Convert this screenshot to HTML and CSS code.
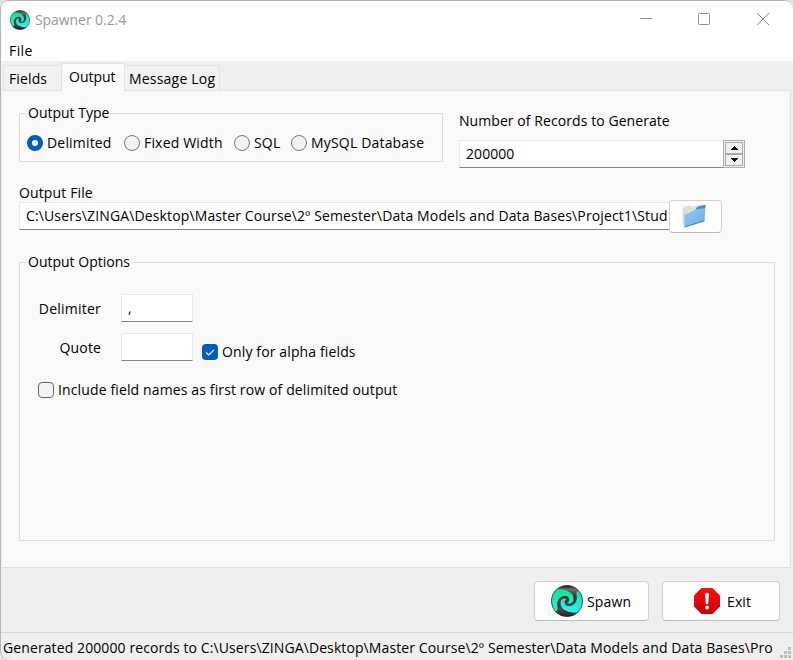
FILE: index.html
```html
<!DOCTYPE html>
<html lang="en">
<head>
<meta charset="utf-8">
<title>Spawner 0.2.4</title>
<link rel="stylesheet" href="styles.css">
</head>
<body>
<svg width="0" height="0" class="defs">
  <defs>
    <linearGradient id="dark" x1="0" y1="0" x2="0" y2="1"><stop offset="0" stop-color="#151515"/><stop offset=".14" stop-color="#707070"/><stop offset=".35" stop-color="#303030"/><stop offset=".75" stop-color="#484848"/><stop offset="1" stop-color="#222"/></linearGradient>
    <linearGradient id="teal" gradientUnits="userSpaceOnUse" x1="0" y1="-16" x2="0" y2="16"><stop offset="0" stop-color="#18d890"/><stop offset=".5" stop-color="#20e8b8"/><stop offset="1" stop-color="#20f4f4"/></linearGradient>
    <linearGradient id="cyan" gradientUnits="userSpaceOnUse" x1="0" y1="16" x2="0" y2="-16"><stop offset="0" stop-color="#18c890"/><stop offset=".5" stop-color="#22e8cc"/><stop offset="1" stop-color="#28f8fa"/></linearGradient>
    <symbol id="swirl" viewBox="-16 -16 32 32">
      <circle r="15.8" fill="url(#dark)"/>
      <path fill="url(#teal)" d="M-12.5 9.5C-17 2-16-7-10.5-11.5C-3-12.5 6.5-9 6.5-2.5C6.8 2 3 4 0 1.5C3.5 1 3-4-1-5C-7-6-11 0-9.5 6C-9 9-10.5 11-12.5 9.5Z"/>
      <path fill="url(#cyan)" transform="rotate(180)" d="M-12.5 9.5C-17 2-16-7-10.5-11.5C-3-12.5 6.5-9 6.5-2.5C6.8 2 3 4 0 1.5C3.5 1 3-4-1-5C-7-6-11 0-9.5 6C-9 9-10.5 11-12.5 9.5Z"/>
      <circle r="15.5" fill="none" stroke="#222" stroke-opacity=".55" stroke-width=".8"/>
    </symbol>
    <linearGradient id="blue" x1="0" y1="0" x2="1" y2="1"><stop offset="0" stop-color="#9bcdf2"/><stop offset="1" stop-color="#68abe2"/></linearGradient>
    <linearGradient id="red" x1="0" y1="0" x2="0" y2="1"><stop offset="0" stop-color="#ff1010"/><stop offset="1" stop-color="#c90000"/></linearGradient>
  </defs>
</svg>
<div class="window">
  <header class="titlebar">
    <svg class="app-icon" width="20" height="20"><use href="#swirl"/></svg>
    <span class="title">Spawner 0.2.4</span>
    <svg class="caption" width="132" height="14" viewBox="0 0 132 14" fill="none" stroke="#8d8d8d">
      <path d="M1 6.5H13"/><rect x="59.5" y="1.5" width="11" height="11" rx="1"/><path d="M118 1L130 13M130 1L118 13"/>
    </svg>
  </header>
  <nav class="menubar"><span class="t-file">File</span></nav>
  <div class="tabs">
    <div class="tab tab-fields"><span>Fields</span></div>
    <div class="tab active"><span>Output</span></div>
    <div class="tab tab-log"><span>Message Log</span></div>
    <div class="tab-rest"></div>
  </div>
  <main class="panel">
    <div class="top-row">
      <fieldset class="group type">
        <legend><span class="t-type">Output Type</span></legend>
        <div class="radios">
          <label class="r1"><i class="radio on"></i><span>Delimited</span></label>
          <label class="r2"><i class="radio"></i><span>Fixed Width</span></label>
          <label class="r3"><i class="radio"></i><span>SQL</span></label>
          <label class="r4"><i class="radio"></i><span>MySQL Database</span></label>
        </div>
      </fieldset>
      <div class="records">
        <span class="t-records">Number of Records to Generate</span>
        <div class="spin">
          <div class="field"><span class="t-num">200000</span></div>
          <div class="arrows">
            <div><svg width="7" height="4"><path d="M3 0h1v1h1v1h1v1h1v1H0V3h1V2h1V1h1z"/></svg></div>
            <div><svg width="7" height="4"><path d="M0 0h7v1H6v1H5v1H4v1H3V3H2V2H1V1H0z"/></svg></div>
          </div>
        </div>
      </div>
    </div>
    <div class="file-label"><span class="t-outfile">Output File</span></div>
    <div class="file-row">
      <div class="field path"><span class="t-path">C:\Users\ZINGA\Desktop\Master Course\2º Semester\Data Models and Data Bases\Project1\Stud</span></div>
      <div class="button browse">
        <svg width="26" height="26" viewBox="0 0 26 26"><path d="M1.5 3L9 1.5L11 3L20 1V14L3 22L1.5 20Z" fill="#dededc"/><path d="M3.3 10.5Q9 9 14 5.8L17 2L24.5.8Q24 10 23.5 17L3.5 23.3Z" fill="url(#blue)"/><path d="M16 3L24.5 1V4L15 5.5Z" fill="#4e8ed8"/><path d="M3.5 23L23.5 16.8" stroke="#3c7fbe" fill="none"/></svg>
      </div>
    </div>
    <fieldset class="group options">
      <legend><span class="t-options">Output Options</span></legend>
      <div class="opt-grid">
        <span class="opt-label t-delim">Delimiter</span>
        <div class="field small"><span>,</span></div>
        <span></span>
        <span class="opt-label t-quote">Quote</span>
        <div class="field small"></div>
        <label class="check-line only"><i class="check on"><svg width="16" height="16" fill="none" stroke="#fff" stroke-width="1.1"><path d="M4 8.3L6.8 11L12 5.8"/></svg></i><span class="t-only">Only for alpha fields</span></label>
      </div>
      <label class="check-line include"><i class="check"></i><span class="t-include">Include field names as first row of delimited output</span></label>
    </fieldset>
  </main>
  <div class="actions">
    <div class="button spawn"><svg width="32" height="32"><use href="#swirl"/></svg><span class="t-spawn">Spawn</span></div>
    <div class="button exit"><svg width="26" height="26" viewBox="0 0 26 26"><path d="M7.5 0h11L26 7.5v11L18.5 26h-11L0 18.5v-11z" fill="url(#red)"/><path d="M11 5.3h4l-.8 10.7h-2.4z" fill="#fff"/><circle cx="13" cy="19.4" r="2" fill="#fff"/></svg><span class="t-exit">Exit</span></div>
  </div>
  <footer class="status">
    <span class="t-status">Generated 200000 records to C:\Users\ZINGA\Desktop\Master Course\2º Semester\Data Models and Data Bases\Pro</span>
    <svg class="grip" width="13" height="13" fill="#bdbdbd"><path d="M8 0h3v3H8zM4 4h3v3H4zM8 4h3v3H8zM0 8h3v3H0zM4 8h3v3H4zM8 8h3v3H8z"/></svg>
  </footer>
</div>
</body>
</html>
```

FILE: styles.css
```css
* { box-sizing: border-box; }
body { margin: 0; background: #e4e4e4; font: 14px/20px "Open Sans", "Noto Sans", sans-serif; color: #000; letter-spacing: .13px; }
.defs { position: absolute; }
span { white-space: pre; }
svg { display: block; flex: none; }
.window { width: 793px; height: 660px; display: flex; flex-direction: column; background: #efefef; border: solid #b5b5b5; border-width: 1px 0 0 1px; border-radius: 9px 9px 0 9px; overflow: hidden; }
.titlebar { height: 37px; background: #fff; display: flex; align-items: center; padding: 0 22px 0 9px; color: #999; }
.title { margin-left: 5px; letter-spacing: -.07px; }
.caption { margin-left: auto; margin-top: -1px; }
.menubar { height: 23px; background: #fff; padding: 3px 8px 0; letter-spacing: .4px; }
.tabs { height: 30px; display: flex; align-items: flex-end; padding-right: 2px; }
.tab { height: 26px; border: 1px solid #e3e3e3; border-width: 1px 0 1px 1px; background: #f1f1f1; padding: 3px 0 0 5px; }
.tab-fields { width: 58px; margin-left: 2px; }
.tab.active { width: 64px; height: 28px; background: #f9f9f9; border-width: 1px 1px 0; padding: 3px 0 0 7px; letter-spacing: 0; }
.tab-log { width: 95px; border-width: 1px 1px 1px 0; padding-left: 4px; letter-spacing: .2px; }
.tab-rest { flex: 1; height: 1px; background: #e3e3e3; }
.panel { height: 477px; margin: 0 2px 0 1px; background: #f9f9f9; border: solid #e3e3e3; border-width: 0 1px 1px 0; padding: 12px 15px 0 17px; }
.group { min-width: 0; margin: 0; padding: 0; border: 1px solid #dcdcdc; }
legend { height: 20px; margin-left: 6px; padding: 0 2px; letter-spacing: 0; }
.top-row { display: flex; height: 80px; }
.type { width: 424px; height: 59px; }
.radios { display: flex; padding-top: 10px; letter-spacing: .18px; }
.radios label, .check-line { display: flex; align-items: center; height: 20px; }
.radio { width: 16px; height: 16px; border: 1px solid #777; border-radius: 50%; background: #f2f2f2; flex: none; margin-right: 4px; }
.radio.on { border: 5px solid #005fb8; background: #fff; }
.r1 { width: 97px; margin-left: 7px; }
.r2 { width: 110px; }
.r3 { width: 57px; }
.records { margin-left: 16px; width: 286px; padding-top: 8px; letter-spacing: .07px; }
.spin { display: flex; margin-top: 9px; }
.field { height: 28px; background: #fff; border: 1px solid #e9e9e9; border-bottom-color: #858585; padding: 3px 6px; overflow: hidden; }
.spin .field { flex: 1; border-right: 0; }
.arrows { width: 22px; height: 28px; border: 1px solid #adadad; background: #f0f0f0; padding: 1px; display: grid; grid-template-rows: 12px 12px; }
.arrows div { border: 1px solid #aaa; display: grid; place-items: center; }
.file-label { height: 20px; }
.file-row { display: flex; height: 52px; margin-top: -3px; }
.path { width: 650px; margin-top: 2px; padding-right: 0; border-right: 0; }
.button { background: #fdfdfd; border: 1px solid #d0d0d0; border-bottom-color: #bcbcbc; border-radius: 4px; display: flex; align-items: center; }
.browse { width: 53px; height: 33px; padding-left: 11px; }
.options { width: 756px; height: 289px; }
.opt-grid { display: grid; grid-template-columns: 81px 72px auto; grid-template-rows: 28px 28px; row-gap: 11px; column-gap: 20px; padding-top: 22px; }
.opt-label { text-align: right; padding-top: 5px; }
.t-delim { letter-spacing: .22px; }
.only { margin: 9px 0 0 -11px; }
.check { width: 16px; height: 16px; border: 1px solid #666; border-radius: 4px; background: #f4f4f4; margin-right: 4px; flex: none; }
.check.on { border: 0; background: #005fb8; }
.include { margin: 19px 0 0 18px; }
.actions { height: 64px; display: flex; gap: 13px; padding: 13px 13px 0 533px; }
.spawn { width: 115px; height: 40px; padding-left: 16px; gap: 4px; }
.exit { width: 118px; height: 40px; padding-left: 31px; gap: 7px; }
.button span { padding-top: 1px; }
.status { flex: 1; border-top: 1px solid #d6d6d6; display: flex; padding: 5px 0 0 2px; position: relative; letter-spacing: .1px; }
.grip { position: absolute; right: 0; bottom: 0; }
```
